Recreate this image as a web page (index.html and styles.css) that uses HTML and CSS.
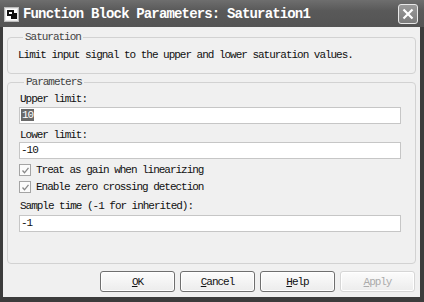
FILE: index.html
```html
<!DOCTYPE html>
<html>
<head>
<meta charset="utf-8">
<link rel="stylesheet" href="styles.css">
</head>
<body>
<div class="window">
  <div class="titlebar">
    <svg class="appicon" width="15" height="15" viewBox="0 0 15 15">
      <rect x="0.5" y="0.5" width="14" height="14" fill="#e8e8e8" stroke="#bbb"/>
      <rect x="2" y="2" width="11" height="11" fill="#fff"/>
      <path d="M3 3h7v3h3v6H7V9H3z" fill="#111"/>
      <rect x="5" y="5" width="3" height="2" fill="#fff"/>
    </svg>
    <span class="title">Function Block Parameters: Saturation1</span>
    <span class="close">
      <svg width="12" height="12" viewBox="0 0 12 12"><path d="M1.5 1.5L10.5 10.5M10.5 1.5L1.5 10.5" stroke="#fff" stroke-width="2.2"/></svg>
    </span>
  </div>
  <div class="body">
    <fieldset class="group desc">
      <legend>Saturation</legend>
      <div class="text">Limit input signal to the upper and lower saturation values.</div>
    </fieldset>
    <fieldset class="group params">
      <legend>Parameters</legend>
      <div class="label">Upper limit:</div>
      <div class="input"><span class="sel">10</span></div>
      <div class="label gap">Lower limit:</div>
      <div class="input">-10</div>
      <div class="check first"><span class="box"><svg width="9" height="9" viewBox="0 0 9 9"><path d="M1.5 4.5L3.5 6.8L7.5 1.8" fill="none" stroke="#888" stroke-width="1.3"/></svg></span>Treat as gain when linearizing</div>
      <div class="check"><span class="box"><svg width="9" height="9" viewBox="0 0 9 9"><path d="M1.5 4.5L3.5 6.8L7.5 1.8" fill="none" stroke="#888" stroke-width="1.3"/></svg></span>Enable zero crossing detection</div>
      <div class="label gap2">Sample time (-1 for inherited):</div>
      <div class="input">-1</div>
    </fieldset>
    <div class="buttons">
      <div class="btn"><u>O</u>K</div>
      <div class="btn"><u>C</u>ancel</div>
      <div class="btn"><u>H</u>elp</div>
      <div class="btn disabled"><u>A</u>pply</div>
    </div>
  </div>
</div>
</body>
</html>
```
FILE: styles.css
```css
* { box-sizing: border-box; }
html, body { margin: 0; padding: 0; background: #3a3a3a; }
body { width: 424px; height: 302px; overflow: hidden; }
.window {
  width: 424px; height: 302px;
  display: flex; flex-direction: column;
  background: #3c3c3c;
  padding: 0 4px 5px 3px;
  font-family: "Liberation Mono", monospace;
  font-size: 11px;
  letter-spacing: -1.02px;
  color: #111;
}
.titlebar {
  height: 27px;
  margin: 0 -4px 0 -3px;
  display: flex; align-items: center;
  background: linear-gradient(#6e6e6e, #595959 40%, #545454);
  padding: 0 6px 0 4px;
}
.appicon { flex: none; margin-top: 1px; }
.title {
  color: #fff; font-weight: bold; font-size: 14px; letter-spacing: -0.85px;
  margin-left: 4px; flex: 1; white-space: nowrap; margin-top: 1px;
}
.close {
  width: 20px; height: 20px; flex: none;
  border: 1px solid #e8e8e8; border-radius: 3px;
  background: linear-gradient(#9a9a9a, #7c7c7c);
  display: flex; align-items: center; justify-content: center;
}
.body {
  flex: 1; background: #f0f0f0;
  display: flex; flex-direction: column;
  padding: 4px 4px 0 4px;
}
.group {
  margin: 0; border: 1px solid #d2d2d2; border-radius: 4px;
  padding: 0; min-width: 0;
}
.group legend {
  padding: 0 2px; margin-left: 5px; line-height: 12px; color: #444;
}
.desc { padding: 6px 10px 12px 10px; }
.desc .text { line-height: 12px; white-space: nowrap; }
.params { margin-top: 2px; padding: 5px 14px 31px 11px; }
.label { line-height: 12px; margin-bottom: 2px; padding-left: 1px; }
.label.gap { margin-top: 5px; margin-bottom: 1px; }
.label.gap2 { margin-top: 7px; margin-bottom: 3px; }
.input {
  height: 17px; background: #fff; border: 1px solid #c6c6c6;
  line-height: 15px; padding-left: 1px; color: #111;
}
.sel { background: #6a6a6a; color: #fff; padding: 0 1px; }
.check { display: flex; align-items: center; height: 12px; margin-top: 5px; white-space: nowrap; }
.check.first { margin-top: 5px; }
.check .box {
  width: 12px; height: 12px; border: 1px solid #a4a4a4; background: #fbfbfb;
  display: flex; align-items: center; justify-content: center; margin-right: 5px; flex: none;
}
.buttons {
  display: flex; justify-content: flex-end; gap: 5px;
  margin-top: 7px; padding-right: 1px;
}
.btn {
  width: 75px; height: 21px; border: 1px solid #6f6f6f; border-radius: 3px;
  background: linear-gradient(#fcfcfc, #ececec);
  display: flex; align-items: center; justify-content: center;
  box-shadow: inset 0 0 0 1px #fff;
}
.btn.disabled { border-color: #d6d6d6; color: #ababab; }
```
